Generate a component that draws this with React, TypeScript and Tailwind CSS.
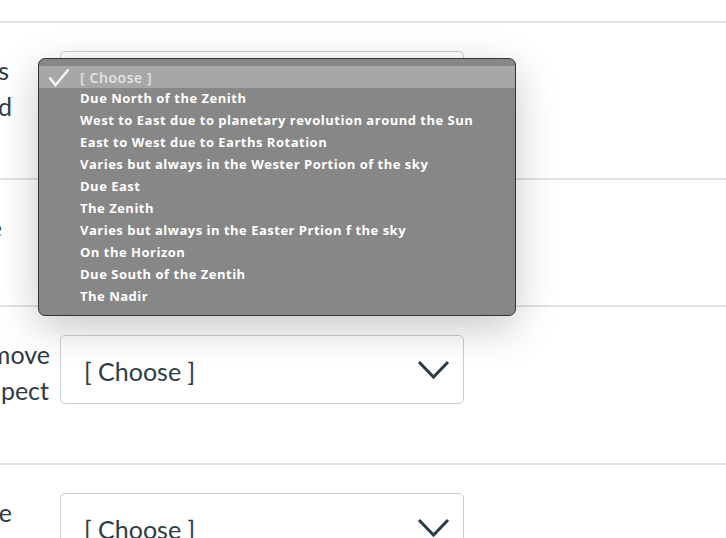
import * as React from "react";

const OPTIONS = [
  "Due North of the Zenith",
  "West to East due to planetary revolution around the Sun",
  "East to West due to Earths Rotation",
  "Varies but always in the Wester Portion of the sky",
  "Due East",
  "The Zenith",
  "Varies but always in the Easter Prtion f the sky",
  "On the Horizon",
  "Due South of the Zentih",
  "The Nadir",
];

const Chevron = () => (
  <svg width="33" height="20" viewBox="0 0 33 20" className="shrink-0">
    <polyline points="2,2 16.5,17 31,2" fill="none" stroke="#2d3b45" strokeWidth="3" />
  </svg>
);

const Select = () => (
  <div className="w-[404px] h-[69px] shrink-0 border border-[#c7cdd1] rounded-[5px] bg-white flex items-center justify-between pl-[23px] pr-[13px]">
    <span className="text-[25px] text-[#2d3b45] pt-[4px]">[ Choose ]</span>
    <Chevron />
  </div>
);

type Line = { text: string; pad: string };

const Row = ({ lines, height }: { lines: Line[]; height: string }) => (
  <div className={`border-t-2 border-[#e1e1e1] pt-[28px] flex items-start gap-[10px] ${height}`}>
    <div className="w-[50px] shrink-0 pt-[1px] text-[25px] leading-[36px] text-[#2d3b45]">
      {lines.map((l, i) => (
        <div key={i} className={`whitespace-nowrap flex justify-end ${l.pad}`}>
          {l.text}
        </div>
      ))}
    </div>
    <Select />
  </div>
);

export default function App() {
  return (
    <div className="w-[726px] h-[538px] overflow-hidden bg-white relative font-['Lato',sans-serif]">
      <div className="h-[21px]" />
      <Row
        height="h-[157px]"
        lines={[
          { text: "In the course of a year the stars", pad: "pr-[41px]" },
          { text: "on the ecliptic are observed", pad: "pr-[38px]" },
        ]}
      />
      <Row
        height="h-[127px]"
        lines={[{ text: "The Sun at noon is found to be", pad: "pr-[48px]" }]}
      />
      <Row
        height="h-[158px]"
        lines={[
          { text: "Where do the planets move", pad: "pr-0" },
          { text: "with respect", pad: "pr-[1px]" },
        ]}
      />
      <Row
        height="h-[120px]"
        lines={[{ text: "The Moon rises in the same", pad: "pr-[38px]" }]}
      />

      {/* open dropdown of the first select */}
      <div className="absolute left-[38px] top-[58px] w-[478px] h-[258px] rounded-[7px] bg-[#878787] border border-[#333333] shadow-[0_12px_40px_rgba(0,0,0,0.22)] pt-[7px] font-['Open_Sans',sans-serif]">
        <div className="h-[22px] bg-[#a7a7a7] flex items-center">
          <svg width="22" height="19" viewBox="0 0 22 19" className="ml-[9px] mr-[10px]">
            <path d="M1.5 9.5 L7.5 17 L20.5 1.5" fill="none" stroke="#f4f4f4" strokeWidth="2.6" />
          </svg>
          <span className="text-[14px] font-semibold tracking-[0.6px] text-[#e4e4e4]">[ Choose ]</span>
        </div>
        {OPTIONS.map((o) => (
          <div key={o} className="h-[22px] flex items-center pl-[41px] text-[13px] font-bold tracking-[0.5px] text-white whitespace-nowrap">
            {o}
          </div>
        ))}
      </div>
    </div>
  );
}
